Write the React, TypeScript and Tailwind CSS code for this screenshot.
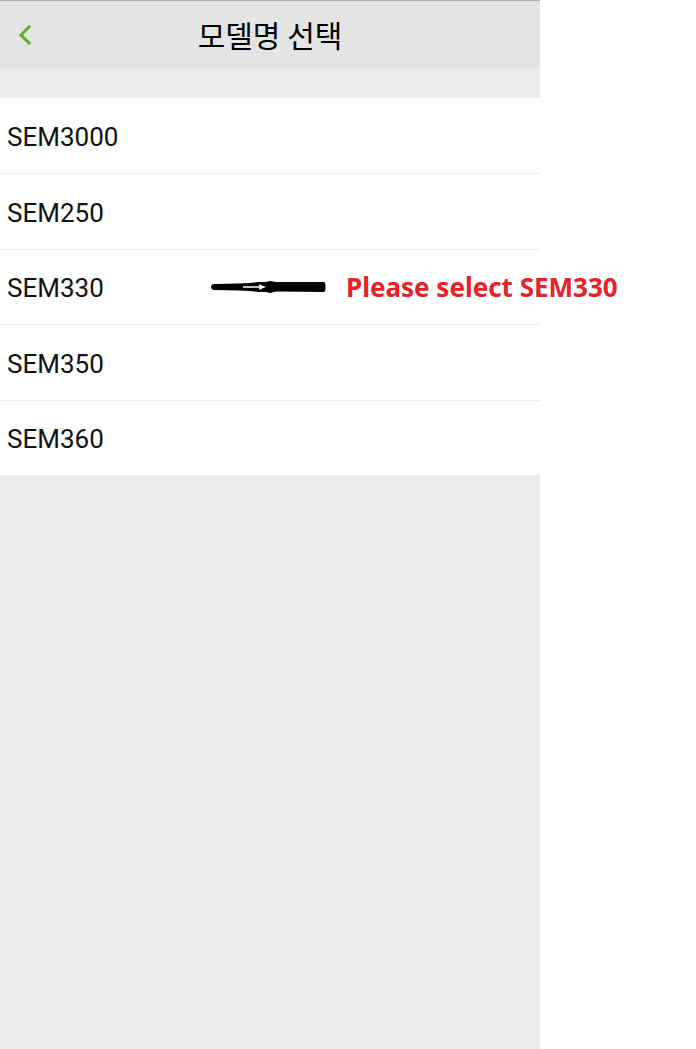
const models = ['SEM3000', 'SEM250', 'SEM330', 'SEM350', 'SEM360'];

function BackIcon() {
  return (
    <svg width="14" height="20" viewBox="0 0 14 20" fill="none">
      <path d="M11 2 L3 10 L11 18" stroke="#5cad2c" strokeWidth="3" strokeLinecap="square" />
    </svg>
  );
}

function Arrow() {
  return (
    <svg width="116" height="14" viewBox="0 0 116 14">
      <path
        d="M4 4 C0 4 0 10 4 10 L28 10.5 L40 11 L48 12 L56 12 L60 13 L66 11.5 L114 12 C116 12 116 2 114 2 L66 2 L60 1 L56 2 L48 2 L40 3 L28 3.5 Z"
        fill="#000"
      />
      <path d="M33 7 L53 7 M49 5 L54 7 L49 9" stroke="#fff" strokeWidth="1.4" fill="none" />
    </svg>
  );
}

export default function App() {
  return (
    <div className="relative flex w-[696px] h-[1049px] bg-white" style={{ fontFamily: 'Roboto, "Noto Sans CJK KR", sans-serif' }}>
      <div className="flex flex-col w-[540px] h-full bg-[#ebebeb]">
        <div className="relative flex items-center justify-center h-[68px] bg-[#e4e4e4] border-t border-[#ababab]">
          <div className="absolute left-[18px] top-[24px]">
            <BackIcon />
          </div>
          <span className="text-[30px] text-black" style={{ fontFamily: '"Noto Sans CJK KR", sans-serif' }}>
            모델명 선택
          </span>
        </div>
        <div className="h-[30px]" />
        <div className="flex flex-col bg-white">
          {models.map((m, i) => (
            <div
              key={m}
              className={`flex items-center h-[75.4px] pl-[7px] pt-[4px] text-[26px] text-[#111] ${i > 0 ? 'border-t border-[#eeeeee]' : ''}`}
            >
              {m}
            </div>
          ))}
        </div>
      </div>
      <div className="absolute left-[210px] top-[280px]">
        <Arrow />
      </div>
      <div
        className="absolute left-[346px] top-[268px] text-[26px] font-bold text-[#e8212a]"
        style={{ fontFamily: '"Noto Sans", sans-serif' }}
      >
        Please select SEM330
      </div>
    </div>
  );
}
